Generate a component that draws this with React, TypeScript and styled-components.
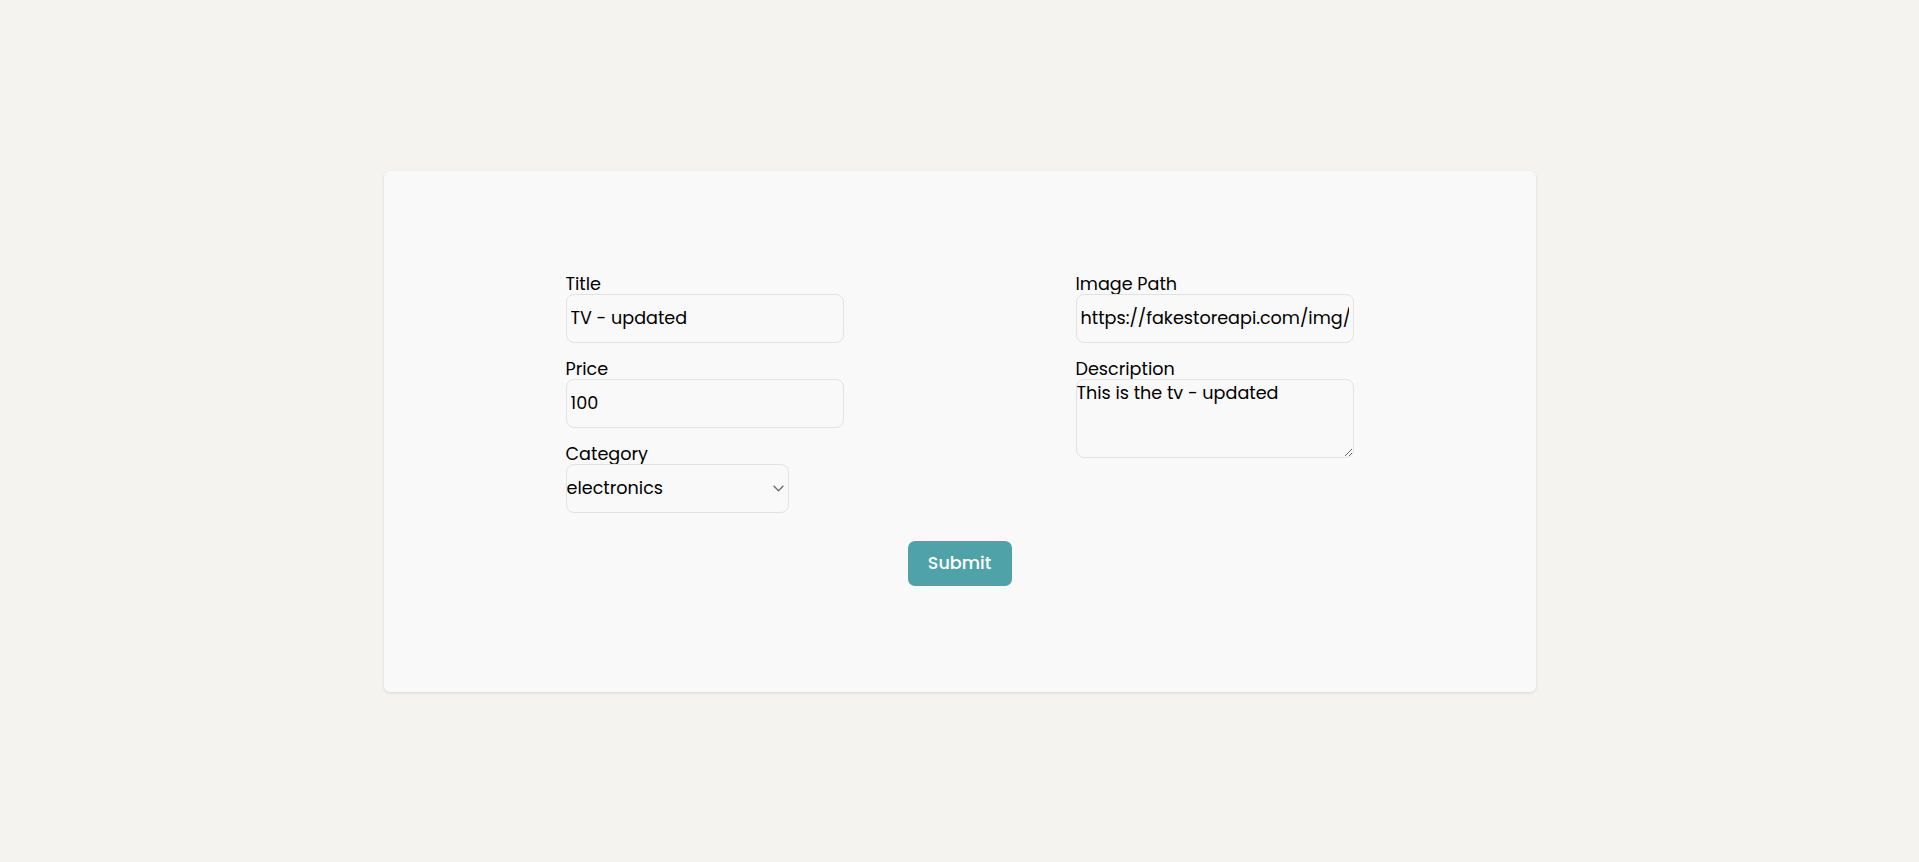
import React from "react";
import styled, { createGlobalStyle } from "styled-components";

const GlobalStyle = createGlobalStyle`
  * { box-sizing: border-box; }
  html, body { margin: 0; padding: 0; }
  body {
    background: #f4f3f0;
    font-family: Poppins, "Open Sans", "Noto Sans", sans-serif;
    color: #000;
  }
`;

const Page = styled.main`
  height: 100vh;
  display: flex;
  align-items: center;
  justify-content: center;
  overflow: hidden;
`;

const Card = styled.section`
  width: 1152px;
  background: #f9f9f9;
  border-radius: 6px;
  box-shadow: 0 1px 3px rgba(0, 0, 0, 0.12);
  padding: 103px 182px 106px;
`;

const Form = styled.form`
  display: flex;
  flex-direction: column;
  align-items: center;
`;

const Columns = styled.div`
  width: 100%;
  display: grid;
  grid-template-columns: 278px 278px;
  justify-content: space-between;
`;

const Column = styled.div`
  display: flex;
  flex-direction: column;
`;

const Field = styled.div`
  display: flex;
  flex-direction: column;
  align-items: flex-start;
  margin-bottom: 16px;
`;

const Label = styled.label`
  font-size: 17.6px;
  line-height: 20px;
`;

const controlBase = `
  border: 1px solid #e2e2e2;
  border-radius: 8px;
  background: #f9f9f9;
  font-family: inherit;
  font-size: 17.6px;
  color: #000;
  outline: none;
`;

const Input = styled.input`
  ${controlBase}
  width: 278px;
  height: 49px;
  padding: 0 4px;
`;

const SelectWrap = styled.div`
  position: relative;
  width: 223px;
  height: 49px;
`;

const Select = styled.select`
  ${controlBase}
  appearance: none;
  -webkit-appearance: none;
  width: 100%;
  height: 100%;
  padding: 0 24px 0 0;
`;

const Chevron = styled.svg`
  position: absolute;
  right: 5px;
  top: 21px;
  width: 11px;
  height: 7px;
  pointer-events: none;
`;

const TextArea = styled.textarea`
  ${controlBase}
  width: 278px;
  height: 79px;
  padding: 0;
  line-height: normal;
`;

const SubmitButton = styled.button`
  margin-top: 12px;
  width: 104px;
  height: 45px;
  border: none;
  border-radius: 7px;
  background: #4fa3a8;
  color: #fff;
  font-family: inherit;
  font-size: 17.6px;
  font-weight: 500;
  cursor: pointer;
`;

export default function App() {
  return (
    <>
      <GlobalStyle />
      <Page>
        <Card>
          <Form onSubmit={(e) => e.preventDefault()}>
            <Columns>
              <Column>
                <Field>
                  <Label htmlFor="title">Title</Label>
                  <Input id="title" defaultValue="TV - updated" />
                </Field>
                <Field>
                  <Label htmlFor="price">Price</Label>
                  <Input id="price" defaultValue="100" />
                </Field>
                <Field>
                  <Label htmlFor="category">Category</Label>
                  <SelectWrap>
                    <Select id="category" defaultValue="electronics">
                      <option value="electronics">electronics</option>
                      <option value="jewelery">jewelery</option>
                      <option value="men's clothing">men's clothing</option>
                      <option value="women's clothing">women's clothing</option>
                    </Select>
                    <Chevron viewBox="0 0 11 7" fill="none">
                      <path d="M0.6 0.8 L5.5 5.8 L10.4 0.8" stroke="#6b6b6b" strokeWidth="1.3" />
                    </Chevron>
                  </SelectWrap>
                </Field>
              </Column>
              <Column>
                <Field>
                  <Label htmlFor="image">Image Path</Label>
                  <Input id="image" defaultValue="https://fakestoreapi.com/img/tv.jpg" />
                </Field>
                <Field>
                  <Label htmlFor="description">Description</Label>
                  <TextArea id="description" defaultValue="This is the tv - updated" />
                </Field>
              </Column>
            </Columns>
            <SubmitButton type="submit">Submit</SubmitButton>
          </Form>
        </Card>
      </Page>
    </>
  );
}
